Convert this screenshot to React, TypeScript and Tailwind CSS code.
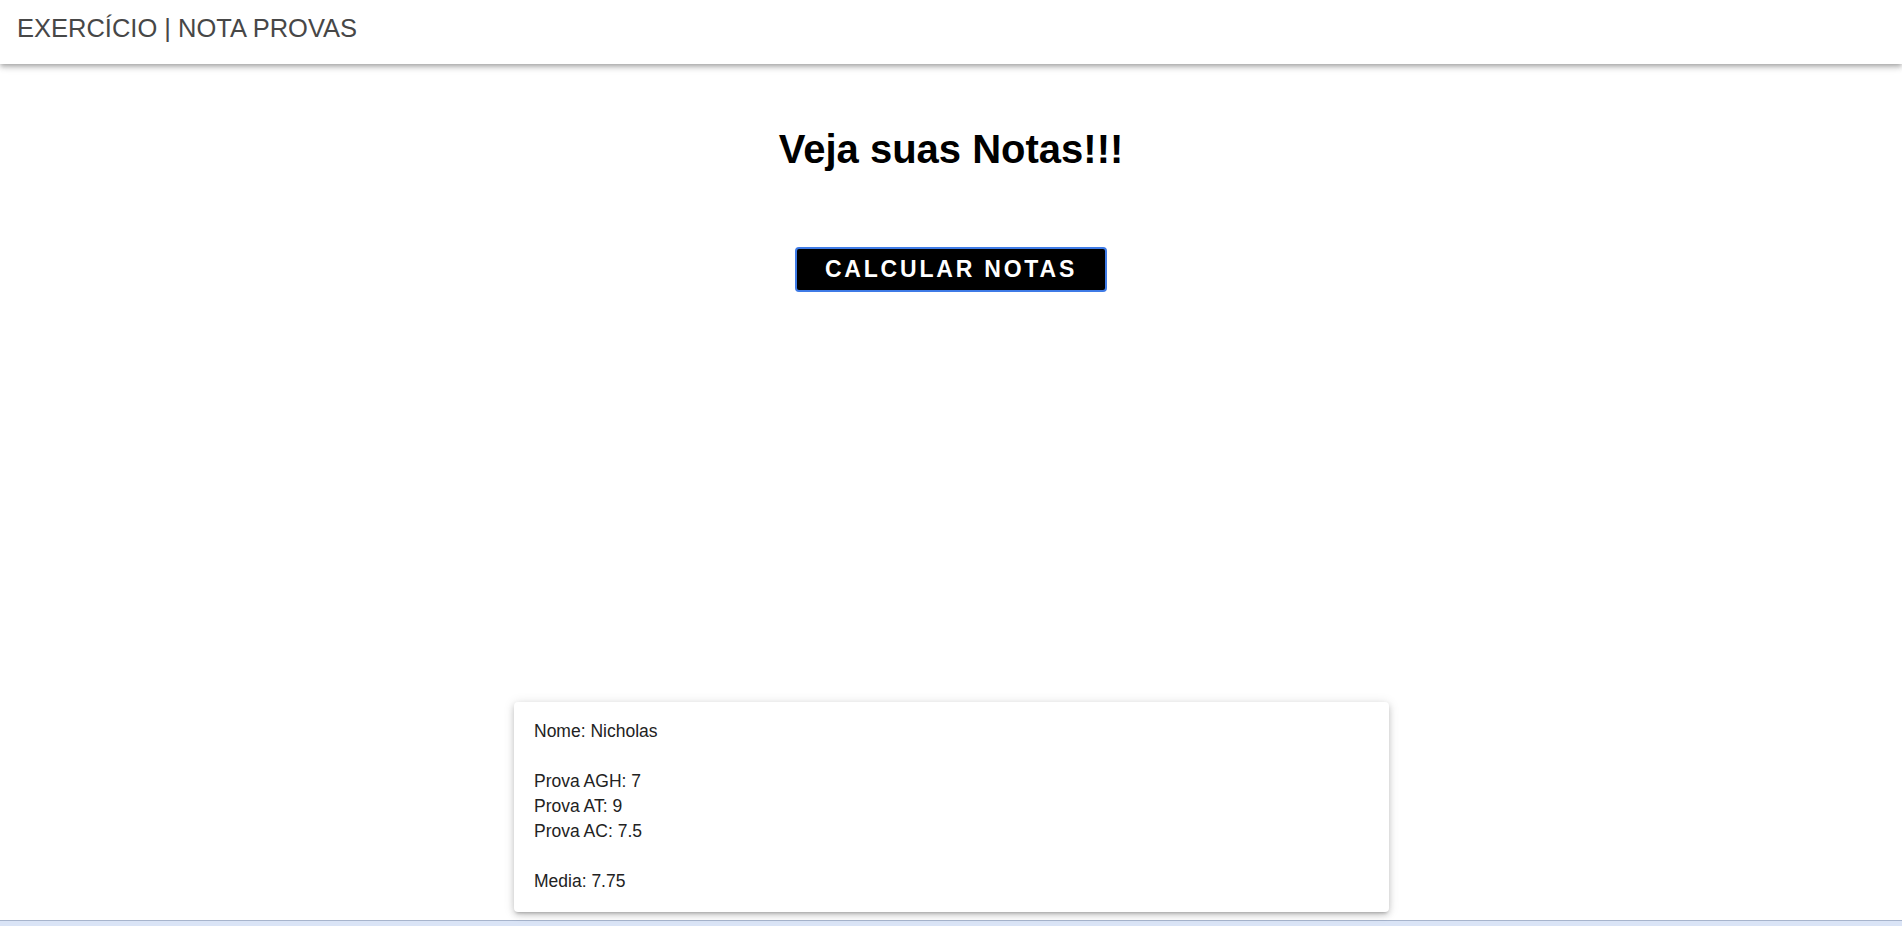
const notas = [
  { label: "Prova AGH", valor: "7" },
  { label: "Prova AT", valor: "9" },
  { label: "Prova AC", valor: "7.5" },
];

const App = () => {
  return (
    <div className="min-h-screen bg-white font-['Liberation_Sans',Arial,sans-serif]">
      <header className="h-16 bg-white shadow-[0_2px_4px_-1px_rgba(0,0,0,0.2),0_4px_5px_0_rgba(0,0,0,0.14),0_1px_10px_0_rgba(0,0,0,0.12)] relative z-10">
        <h6 className="pl-[17px] pt-[14px] text-[25.5px] leading-[29px] text-[#474747]">
          EXERCÍCIO | NOTA PROVAS
        </h6>
      </header>

      <main className="flex flex-col">
        <h1 className="mt-[62px] text-center text-[40px] leading-[46px] font-bold text-black">
          Veja suas Notas!!!
        </h1>

        <div className="flex justify-center mt-[75px]">
          <button
            type="button"
            className="h-[45px] w-[312px] flex items-center justify-center bg-black text-white text-[23px] font-bold tracking-[2.8px] border-2 border-[#3f7be6] rounded-[4px]"
          >
            CALCULAR NOTAS
          </button>
        </div>

        <div className="mt-[410px] ml-[514px] w-[875px] bg-white rounded-[4px] pt-[17px] pb-[18px] px-[20px] text-[17.5px] leading-[25px] text-[#222222] shadow-[0_3px_3px_-2px_rgba(0,0,0,0.2),0_3px_6px_0_rgba(0,0,0,0.16),0_1px_12px_0_rgba(0,0,0,0.12)]">
          <p>Nome: Nicholas</p>
          <br />
          {notas.map((nota) => (
            <p key={nota.label}>
              {nota.label}: {nota.valor}
            </p>
          ))}
          <br />
          <p>Media: 7.75</p>
        </div>
      </main>

      <div className="mt-[8px] h-[40px] border-t border-[#a7b4cc] bg-[#dae4f6]"></div>
    </div>
  );
};

export default App;
